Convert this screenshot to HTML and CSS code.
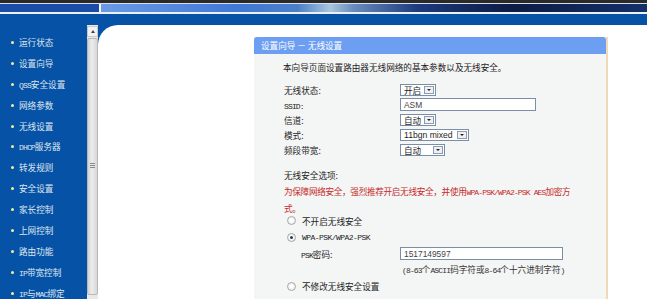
FILE: index.html
```html
<!DOCTYPE html>
<html lang="zh-CN">
<head>
    <meta charset="UTF-8">
    <title>设置向导 - 无线设置</title>
    <link rel="stylesheet" href="styles.css">
</head>
<body>
    <!-- top banner -->
    <div class="top">
        <div class="top-dark"></div>
        <div class="top-banner">
            <div class="banner-left"></div>
            <div class="banner-right"></div>
        </div>
        <div class="top-line"></div>
        <div class="top-blue"></div>
    </div>

    <div class="main">
        <!-- left menu -->
        <ul class="menu">
            <li>运行状态</li>
            <li>设置向导</li>
            <li><span class="en">QSS</span>安全设置</li>
            <li>网络参数</li>
            <li>无线设置</li>
            <li><span class="en">DHCP</span>服务器</li>
            <li>转发规则</li>
            <li>安全设置</li>
            <li>家长控制</li>
            <li>上网控制</li>
            <li>路由功能</li>
            <li><span class="en">IP</span>带宽控制</li>
            <li><span class="en">IP</span>与<span class="en">MAC</span>绑定</li>
        </ul>

        <div class="scrollbar">
            <div class="scroll-up"></div>
            <div class="scroll-thumb"><span class="grip"></span></div>
        </div>

        <div class="content">
            <div class="panel">
                <div class="panel-head">设置向导 － 无线设置</div>
                <div class="panel-body">
                    <p class="intro">本向导页面设置路由器无线网络的基本参数以及无线安全。</p>

                    <div class="form-row">
                        <span class="label">无线状态:</span>
                        <span class="select w-36">开启<i class="arrow"></i></span>
                    </div>
                    <div class="form-row">
                        <span class="label"><span class="en">SSID:</span></span>
                        <span class="input w-136">ASM</span>
                    </div>
                    <div class="form-row">
                        <span class="label">信道:</span>
                        <span class="select w-36">自动<i class="arrow"></i></span>
                    </div>
                    <div class="form-row">
                        <span class="label">模式:</span>
                        <span class="select w-69">11bgn mixed<i class="arrow"></i></span>
                    </div>
                    <div class="form-row">
                        <span class="label">频段带宽:</span>
                        <span class="select w-45">自动<i class="arrow"></i></span>
                    </div>

                    <p class="sec-title">无线安全选项:</p>
                    <p class="warn">为保障网络安全，强烈推荐开启无线安全，并使用<span class="en">WPA-PSK/WPA2-PSK AES</span>加密方<br>式。</p>

                    <div class="radio-row r1"><span class="radio"></span>不开启无线安全</div>
                    <div class="radio-row r2"><span class="radio checked"></span><span class="en wide">WPA-PSK/WPA2-PSK</span></div>
                    <div class="psk-row">
                        <span class="psk-label"><span class="en">PSK</span>密码:</span>
                        <span class="input w-163">1517149597</span>
                    </div>
                    <div class="hint"><span class="en">(8-63</span>个<span class="en">ASCII</span>码字符或<span class="en">8-64</span>个十六进制字符<span class="en">)</span></div>
                    <div class="radio-row r3"><span class="radio"></span>不修改无线安全设置</div>
                </div>
            </div>
        </div>
    </div>
</body>
</html>
```

FILE: styles.css
```css
html, body {
    margin: 0;
    padding: 0;
    height: 100%;
    overflow: hidden;
    background: #ffffff;
    font-family: "SimSun", "Noto Sans CJK SC", sans-serif;
    font-size: 8.6px;
}

/* half-width latin, like the old bitmap font */
.en {
    font-family: "Liberation Mono", monospace;
    font-size: 8px;
    letter-spacing: -0.85px;
}
.en.wide {
    letter-spacing: -0.55px;
}

/* Top banner */
.top-dark {
    height: 3px;
    background: #2a2a2a;
}
.top-banner {
    height: 8px;
    display: flex;
    border-top: 1px solid #d8dde6;
}
.banner-left {
    width: 99px;
    background: #1a4ea6;
    border-right: 2px solid #f4f6fa;
}
.banner-right {
    flex: 1;
    background: linear-gradient(90deg, #6a9ae6 0%, #3f78d6 25%, #4a7fc8 36%, #a8c6de 42%, #6a8ec0 46%, #1c3a7c 58%, #0c1c44 75%, #14306a 100%);
}
.top-line {
    height: 2px;
    background: #eef0f4;
}
.top-blue {
    height: 11px;
    background: #0552a6;
}

.main {
    display: flex;
    height: 274px;
    background: #0552a6;
}

/* Left menu */
.menu {
    width: 87px;
    margin: 0;
    padding: 7px 0 0 0;
    list-style: none;
    color: #dfe6ee;
}
.menu li {
    height: 20.9px;
    line-height: 20.9px;
    padding-left: 19px;
    position: relative;
    white-space: nowrap;
}
.menu li::before {
    content: "";
    position: absolute;
    left: 11px;
    top: 9px;
    width: 3px;
    height: 3px;
    border-radius: 50%;
    background: #f4eea0;
}

/* Frame scrollbar */
.scrollbar {
    width: 11px;
    background: #e9e9e9;
    display: flex;
    flex-direction: column;
}
.scroll-up {
    height: 11px;
    margin-top: 1px;
    background: #f2f2f2;
    border: 1px solid #c8c8c8;
    box-sizing: border-box;
    position: relative;
}
.scroll-up::after {
    content: "";
    position: absolute;
    left: 3px;
    top: 3px;
    border-left: 2px solid transparent;
    border-right: 2px solid transparent;
    border-bottom: 3px solid #444;
}
.scroll-thumb {
    height: 257px;
    margin-top: 1px;
    background: linear-gradient(90deg, #d4d4d4, #ececec 40%, #d8d8d8);
    border: 1px solid #b8b8b8;
    border-radius: 2px;
    box-sizing: border-box;
    position: relative;
}
.grip {
    position: absolute;
    left: 2px;
    top: 124px;
    width: 5px;
    height: 5px;
    background: repeating-linear-gradient(180deg, #8a8a8a 0 1px, transparent 1px 2px);
}

/* Content frame */
.content {
    flex: 1;
    background: #ffffff;
    border-top-left-radius: 20px;
}

.panel {
    margin: 12px 0 0 156px;
    width: 352px;
    border-right: 2px solid #f0d9b4;
    background: #f4f5f5;
    height: 270px;
}
.panel-head {
    height: 17px;
    line-height: 17px;
    padding-left: 7px;
    background: #6c9ef2;
    color: #ffffff;
    border-top-left-radius: 3px;
    border-top-right-radius: 3px;
}
.panel-body {
    padding: 7px 0 0 29px;
    color: #1e1e1e;
}
.intro {
    margin: 0;
    line-height: 13px;
}

.form-row {
    display: flex;
    align-items: center;
    height: 15px;
}
.intro + .form-row {
    margin-top: 8px;
}
.label {
    width: 116px;
    padding-left: 1px;
}

.select,
.input {
    display: inline-flex;
    align-items: center;
    height: 12px;
    box-sizing: border-box;
    border: 1px solid #7b8ea8;
    background: #ffffff;
    padding-left: 3px;
    position: relative;
}
.input {
    height: 13px;
    font-family: "Liberation Sans", Arial, sans-serif;
    font-size: 8.4px;
    color: #444;
}
.select.w-69 {
    font-family: "Liberation Sans", Arial, sans-serif;
    font-size: 8.6px;
}
.arrow {
    position: absolute;
    right: 1px;
    top: 1px;
    width: 10px;
    height: 8px;
    box-sizing: border-box;
    border: 1px solid #8c9cb4;
    background: #f0f0f0;
}
.arrow::after {
    content: "";
    position: absolute;
    left: 2px;
    top: 2px;
    border-left: 2px solid transparent;
    border-right: 2px solid transparent;
    border-top: 2px solid #222;
}
.w-36 { width: 36px; }
.w-45 { width: 45px; }
.w-69 { width: 69px; }
.w-136 { width: 136px; }
.w-163 { width: 163px; }

.sec-title {
    margin: 12px 0 0 1px;
    line-height: 13px;
}
.warn {
    margin: 2px 0 0 1px;
    line-height: 14.5px;
    letter-spacing: -0.3px;
    color: #c62a2a;
}

.radio-row {
    display: flex;
    align-items: center;
    height: 13px;
    padding-left: 4px;
}
.r1 { margin-top: -1px; }
.r2 { margin-top: 3.5px; }
.r3 { margin-top: 4px; }
.radio {
    width: 9px;
    height: 9px;
    box-sizing: border-box;
    border-radius: 50%;
    border: 1px solid #a8a8a8;
    background: radial-gradient(circle, #ffffff 30%, #dcdcdc 100%);
    margin-right: 6px;
    position: relative;
}
.radio.checked::after {
    content: "";
    position: absolute;
    left: 2px;
    top: 2px;
    width: 3px;
    height: 3px;
    border-radius: 50%;
    background: #2a3a50;
}

.psk-row {
    display: flex;
    align-items: center;
    height: 14px;
    margin-top: 3px;
    padding-left: 18px;
}
.psk-label {
    width: 99px;
}
.hint {
    margin-top: 2px;
    height: 13px;
    line-height: 13px;
    padding-left: 119px;
    color: #333;
}
```
